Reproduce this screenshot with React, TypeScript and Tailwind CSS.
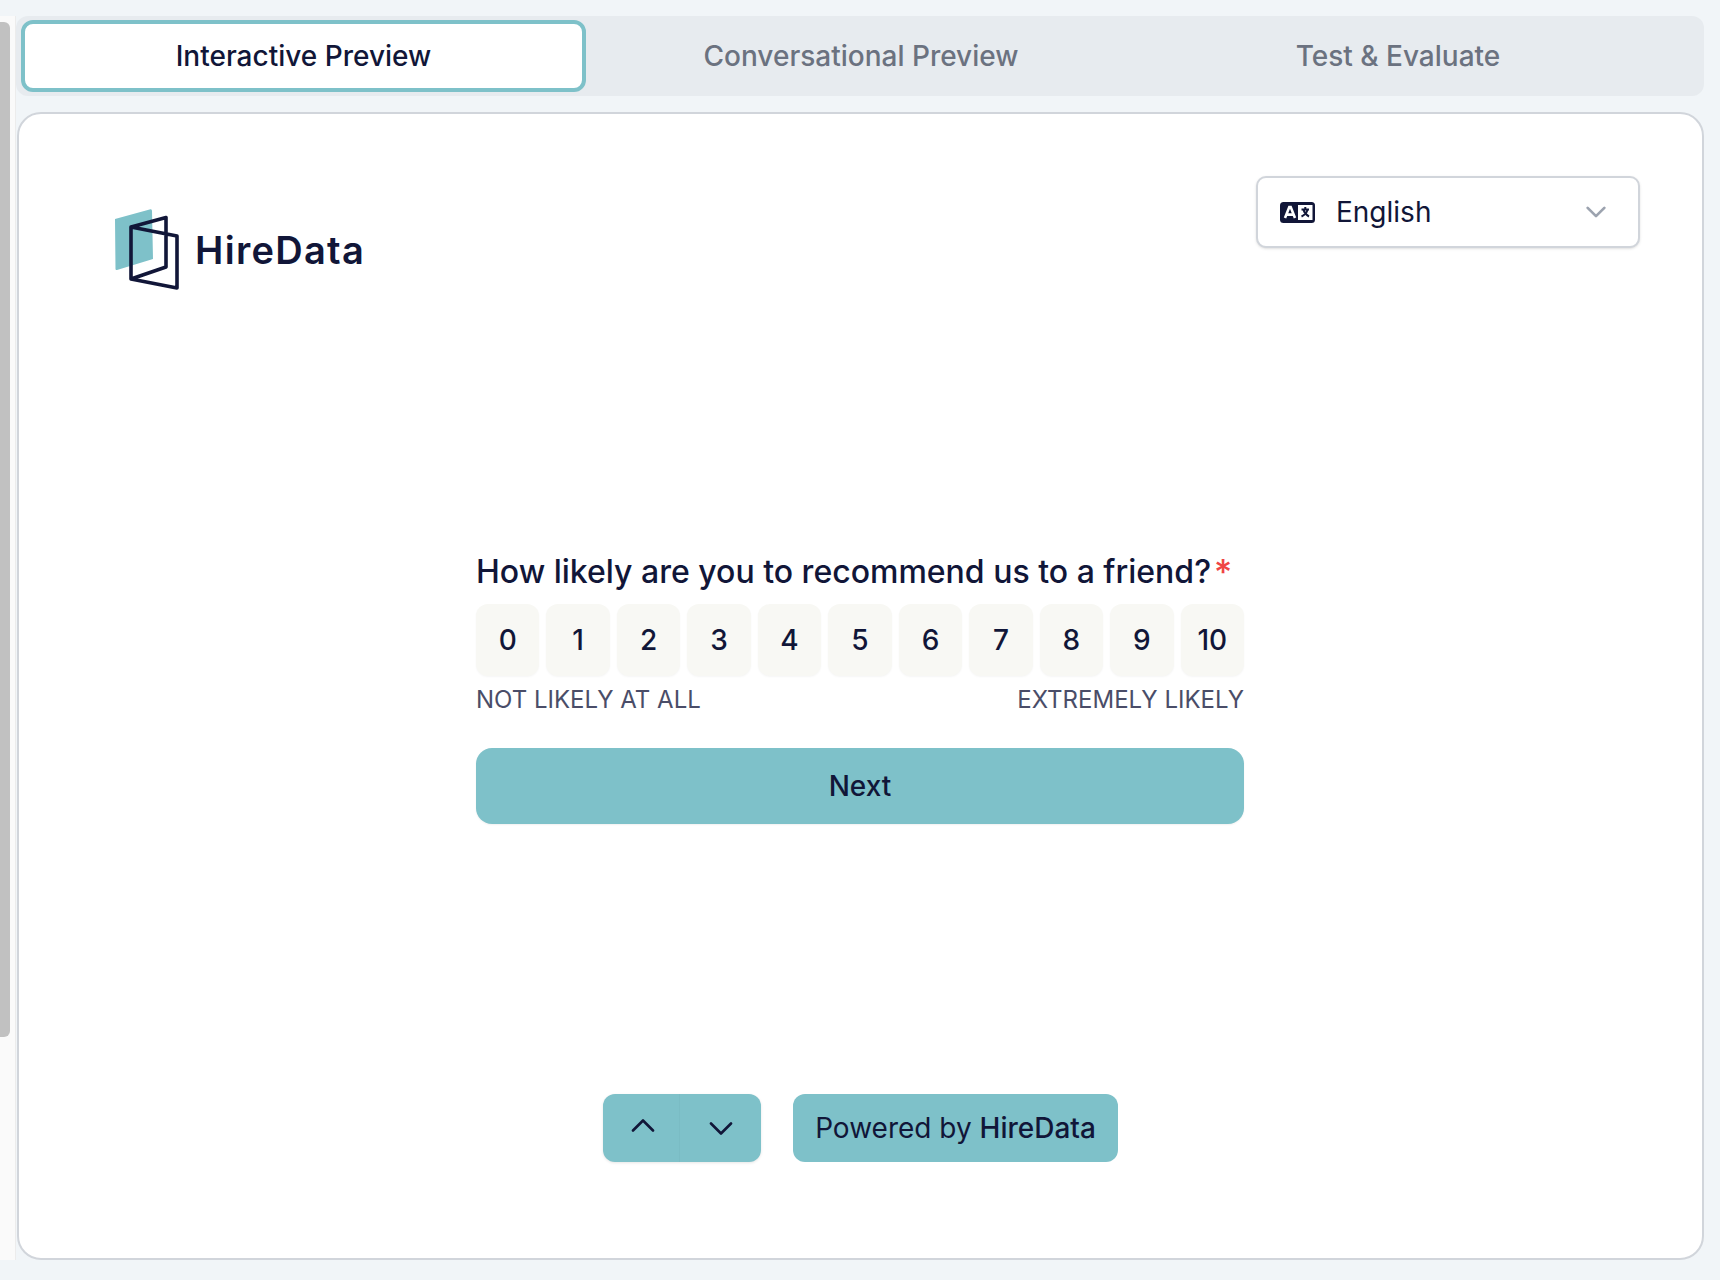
const nums = [0, 1, 2, 3, 4, 5, 6, 7, 8, 9, 10];

const Logo = () => (
  <svg width="65" height="81" viewBox="0 0 65 81" fill="none">
    <path d="M0 10 L35.5 0.3 Q37 0 37 2 L38 50 L2 61 Q0.5 61.3 0.5 60 Z" fill="#7ec1c9" />
    <path
      d="M16 18 L51 8.5 L51 58 L16 70 Z M16 18 L62 27 L62 79 L16 70"
      stroke="#111638"
      strokeWidth="3.6"
      strokeLinejoin="round"
      fill="none"
    />
  </svg>
);

const LangIcon = () => (
  <svg width="35" height="21" viewBox="0 0 35 21">
    <rect x="0" y="0" width="35" height="21" rx="3.5" fill="#111638" />
    <rect x="18" y="3" width="14.5" height="15" fill="#ffffff" />
    <path d="M5 16 L9.3 5 L10.7 5 L15 16 M7 12.6 L13 12.6" stroke="#ffffff" strokeWidth="2.6" fill="none" />
    <path d="M21.5 7.5 L29 7.5 M25.3 5 L25.3 7.5 M23.5 8 Q25 12.5 29 14.5 M27.5 8 Q26 12.5 21.5 14.5" stroke="#111638" strokeWidth="2" fill="none" />
  </svg>
);

const Chevron = ({ up, sw = 2.6, className }: { up?: boolean; sw?: number; className: string }) => (
  <svg viewBox="0 0 24 13" fill="none" className={className}>
    <path
      d={up ? "M2 11.5 L12 1.5 L22 11.5" : "M2 1.5 L12 11.5 L22 1.5"}
      stroke="currentColor"
      strokeWidth={sw}
      strokeLinecap="round"
      strokeLinejoin="round"
    />
  </svg>
);

export default function App() {
  return (
    <div className="flex h-[1280px] w-[1720px] overflow-hidden bg-[#f1f5f8] font-['Inter',sans-serif] text-[#111638]">
      <div className="mt-4 mb-5 w-[16px] shrink-0 border-r border-[#ececec] bg-[#fafafa]">
        <div className="mt-[6px] h-[1015px] w-[10px] rounded-r-md bg-[#c1c1c1]" />
      </div>

      <div className="flex min-w-0 flex-1 flex-col pt-4 pr-4 pb-5">
        <div className="flex h-20 shrink-0 items-center rounded-xl bg-[#e7ebef] pl-[5px] text-[28px] font-medium text-[#6b7280]">
          <button className="flex h-[72px] w-[565px] items-center justify-center rounded-xl border-4 border-[#7ec1c9] bg-white text-[#111638]">
            Interactive Preview
          </button>
          <button className="flex h-[72px] w-[550px] items-center justify-center">Conversational Preview</button>
          <button className="flex h-[72px] w-[524px] items-center justify-center">Test &amp; Evaluate</button>
        </div>

        <div className="mt-4 ml-[1px] flex min-h-0 flex-1 flex-col rounded-3xl border-2 border-[#d1d5db] bg-white">
          <div className="flex items-start justify-between pt-[62px] pr-[62px] pl-[96px]">
            <div className="mt-[33px] flex items-center gap-[15px]">
              <Logo />
              <span className="text-[38px] leading-none font-semibold tracking-[1.3px]">HireData</span>
            </div>
            <button className="flex h-[72px] w-[384px] items-center rounded-[10px] border-2 border-[#d1d5db] bg-white pr-[32px] pl-[22px] text-[28px] shadow-sm">
              <LangIcon />
              <span className="ml-[21px] flex-1 text-left">English</span>
              <Chevron sw={3.2} className="h-[12px] w-[20px] text-[#9ca3af]" />
            </button>
          </div>

          <div className="mt-[260px] ml-[457px] w-[768px]">
            <div className="flex h-[44px] items-center text-[32px] font-medium">
              How likely are you to recommend us to a friend?
              <span className="ml-[3px] text-[35px] text-[#ef4444]">*</span>
            </div>
            <div className="mt-[10px] flex gap-[7px]">
              {nums.map((n) => (
                <button
                  key={n}
                  className="flex h-[72px] flex-1 items-center justify-center rounded-xl bg-[#f8f8f4] text-[28px] font-medium shadow-[0_1px_2px_rgba(0,0,0,0.04)]"
                >
                  {n}
                </button>
              ))}
            </div>
            <div className="mt-[7px] flex justify-between text-[24px] leading-[34px] text-[#4a4d68]">
              <span>NOT LIKELY AT ALL</span>
              <span>EXTREMELY LIKELY</span>
            </div>
            <button className="mt-[31px] flex h-[76px] w-full items-center justify-center rounded-2xl bg-[#7ec1c9] text-[28px] font-medium shadow-[0_1px_2px_rgba(0,0,0,0.06)]">
              Next
            </button>
          </div>

          <div className="mt-[270px] flex justify-center gap-[32px]">
            <div className="flex h-[68px] w-[158px] rounded-xl bg-[#7ec1c9] shadow-[0_1px_3px_rgba(0,0,0,0.1)]">
              <button className="flex w-[77px] items-center justify-center border-r border-[#7abcc4] pl-[3px]">
                <Chevron up className="mb-[5px] h-[13px] w-[24px]" />
              </button>
              <button className="flex flex-1 items-center justify-center">
                <Chevron className="mt-[1px] h-[13px] w-[24px]" />
              </button>
            </div>
            <div className="flex h-[68px] w-[325px] items-center justify-center rounded-xl bg-[#7ec1c9] text-[28px]">
              Powered by&nbsp;<span className="font-medium">HireData</span>
            </div>
          </div>
        </div>
      </div>
    </div>
  );
}
